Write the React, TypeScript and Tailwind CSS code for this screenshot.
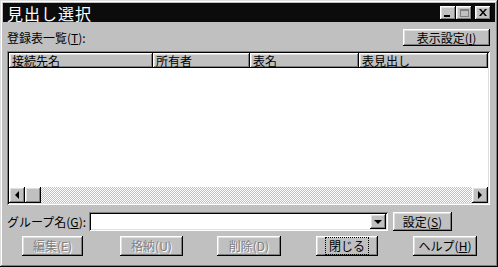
const font = "font-['MS_Gothic','Noto_Sans_CJK_JP',sans-serif]";

const raised =
  "bg-[#c0c0c0] shadow-[inset_-1px_-1px_#000,inset_1px_1px_#fff,inset_-2px_-2px_#808080,inset_2px_2px_#dfdfdf]";
const sunken =
  "shadow-[inset_1px_1px_#808080,inset_-1px_-1px_#fff,inset_2px_2px_#000,inset_-2px_-2px_#dfdfdf]";

function Btn({
  label,
  className,
  disabled,
  focused,
}: {
  label: React.ReactNode;
  className: string;
  disabled?: boolean;
  focused?: boolean;
}) {
  return (
    <div
      className={`${raised} ${className} flex items-center justify-center text-[12px] leading-none ${
        disabled ? "text-[#808080] [text-shadow:1px_1px_#fff]" : "text-black"
      } ${focused ? "shadow-[inset_-1px_-1px_#000,inset_1px_1px_#000,inset_-2px_-2px_#000,inset_2px_2px_#fff,inset_-3px_-3px_#808080]" : ""}`}
    >
      {focused ? (
        <span className="px-[3px] py-[2px] border border-dotted border-black">{label}</span>
      ) : (
        label
      )}
    </div>
  );
}

function TitleBtn({ children }: { children: React.ReactNode }) {
  return (
    <div className={`${raised} w-[16px] h-[14px] flex items-center justify-center`}>{children}</div>
  );
}

const columns = [
  { name: "接続先名", w: "w-[144px]" },
  { name: "所有者", w: "w-[97px]" },
  { name: "表名", w: "w-[109px]" },
  { name: "表見出し", w: "flex-1" },
];

export default function App() {
  return (
    <div
      className={`${font} w-[498px] h-[267px] bg-[#c0c0c0] p-[3px] flex flex-col shadow-[inset_-1px_-1px_#000,inset_1px_1px_#dfdfdf,inset_-2px_-2px_#808080,inset_2px_2px_#fff]`}
    >
      {/* title bar */}
      <div className="h-[19px] bg-[#0c0c0c] flex items-center pl-[4px] pr-[4px]">
        <span className="text-white text-[16px] leading-none tracking-[1px]">見出し選択</span>
        <div className="ml-auto flex items-center">
          <TitleBtn>
            <div className="w-[6px] h-[2px] bg-black mt-[6px] mr-[2px]" />
          </TitleBtn>
          <TitleBtn>
            <div className="w-[9px] h-[8px] border border-[#808080] border-t-2" />
          </TitleBtn>
          <div className="w-[3px]" />
          <TitleBtn>
            <svg width="8" height="7" viewBox="0 0 8 7">
              <path d="M0 0h2l2 2.5L6 0h2L5 3.5 8 7H6L4 4.5 2 7H0l3-3.5z" fill="#000" />
            </svg>
          </TitleBtn>
        </div>
      </div>

      <div className="flex items-center justify-between pl-[4px] pr-[5px] mt-[7px] h-[17px]">
        <span className="text-[12px] leading-none">
          登録表一覧(<span className="underline">T</span>):
        </span>
        <Btn label={<>表示設定(<span className="underline">I</span>)</>} className="w-[87px] h-[17px]" />
      </div>

      {/* list */}
      <div className={`${sunken} bg-white mt-[5px] ml-[4px] mr-[5px] h-[154px] p-[2px] flex flex-col`}>
        <div className="flex h-[15px]">
          {columns.map((c) => (
            <div
              key={c.name}
              className={`${c.w} ${raised} text-[12px] leading-[15px] pl-[3px] whitespace-nowrap`}
            >
              {c.name}
            </div>
          ))}
        </div>
        <div className="flex-1" />
        <div className="flex h-[16px]">
          <div className={`${raised} w-[16px] h-[16px] flex items-center justify-center`}>
            <div className="w-0 h-0 border-y-[4px] border-y-transparent border-r-[4px] border-r-black" />
          </div>
          <div className={`${raised} w-[16px] h-[16px]`} />
          <div className="flex-1 bg-[repeating-conic-gradient(#c0c0c0_0_25%,#fff_0_50%)] bg-[length:2px_2px]" />
          <div className={`${raised} w-[16px] h-[16px] flex items-center justify-center`}>
            <div className="w-0 h-0 border-y-[4px] border-y-transparent border-l-[4px] border-l-black" />
          </div>
        </div>
      </div>

      {/* group row */}
      <div className="flex items-center mt-[7px] pl-[4px] h-[19px]">
        <span className="text-[12px] leading-none w-[82px]">
          グループ名(<span className="underline">G</span>):
        </span>
        <div className={`${sunken} bg-white w-[299px] h-[19px] flex justify-end items-center pr-[2px]`}>
          <div className={`${raised} w-[16px] h-[15px] flex items-center justify-center`}>
            <div className="w-0 h-0 border-x-[4px] border-x-transparent border-t-[4px] border-t-black" />
          </div>
        </div>
        <Btn label={<>設定(<span className="underline">S</span>)</>} className="ml-[5px] w-[59px] h-[19px]" />
      </div>

      {/* bottom buttons */}
      <div className="flex items-center mt-[5px] pl-[19px] h-[20px]">
        <Btn label="編集(E)" className="w-[61px] h-[20px]" disabled />
        <Btn label="格納(U)" className="ml-[37px] w-[63px] h-[20px]" disabled />
        <Btn label="削除(D)" className="ml-[34px] w-[64px] h-[20px]" disabled />
        <Btn label="閉じる" className="ml-[35px] w-[62px] h-[20px]" focused />
        <Btn label={<>ヘルプ(<span className="underline">H</span>)</>} className="ml-[35px] w-[64px] h-[20px]" />
      </div>
    </div>
  );
}
